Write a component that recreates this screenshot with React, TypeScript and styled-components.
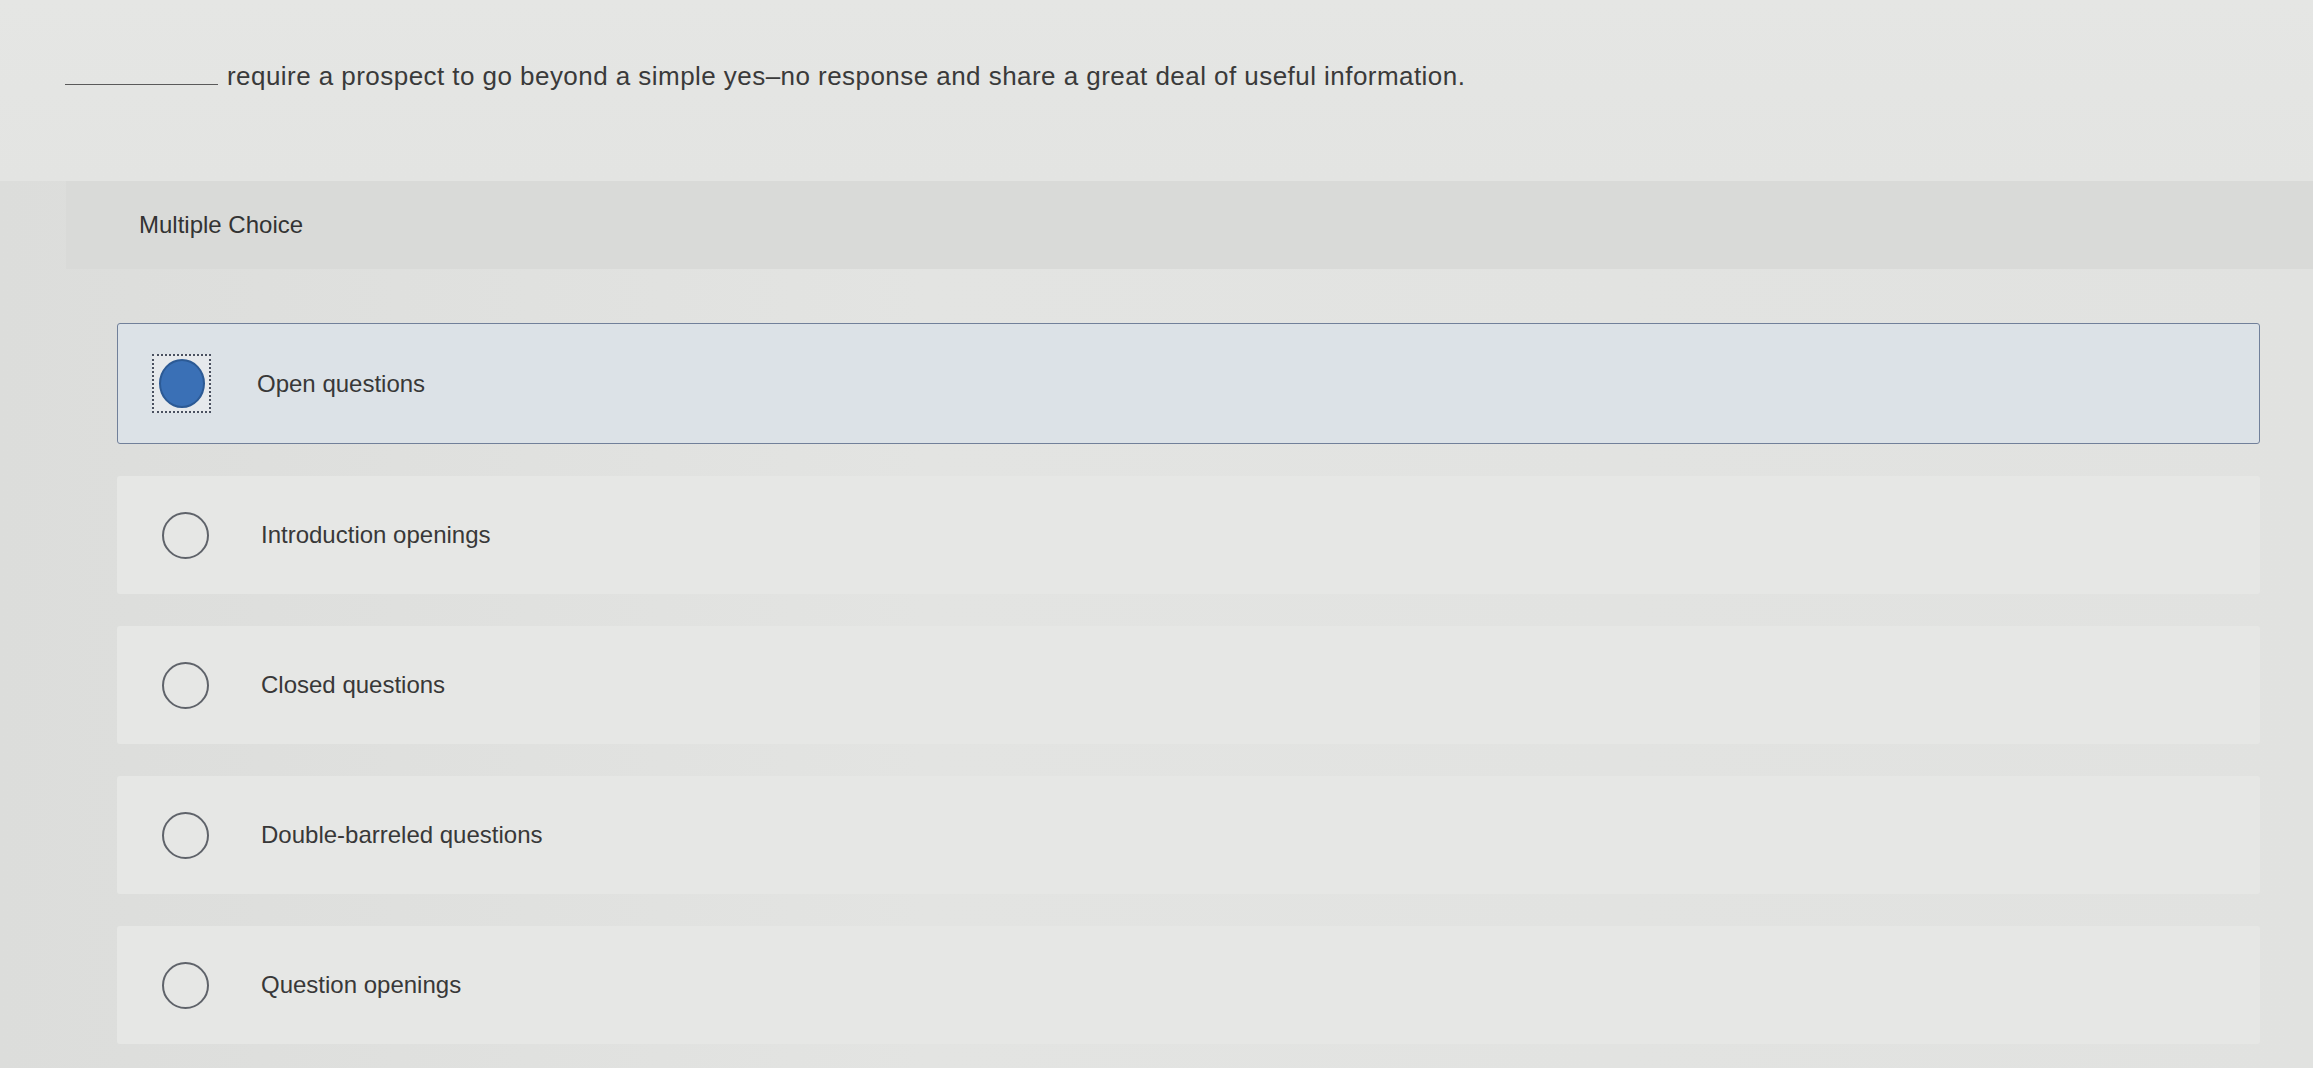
import React from 'react'
import styled, { createGlobalStyle } from 'styled-components'

const GlobalStyle = createGlobalStyle`
  html, body {
    margin: 0;
    padding: 0;
  }
  body {
    background: #dfe0de;
    font-family: "Liberation Sans", Arial, sans-serif;
    color: #333;
  }
`

const Page = styled.div`
  min-height: 1068px;
  background: linear-gradient(90deg, #dcdddb 0%, #e3e4e2 40%, #e1e2e0 100%);
`

const QuestionArea = styled.div`
  height: 181px;
  box-sizing: border-box;
  padding: 61px 0 0 65px;
  background: linear-gradient(180deg, #e5e6e4 0%, #e3e4e2 100%);
`

const Prompt = styled.p`
  margin: 0;
  display: flex;
  align-items: baseline;
  font-size: 26px;
  line-height: 30px;
  letter-spacing: 0.45px;
  color: #3a3a3a;
`

const Blank = styled.span`
  display: inline-block;
  width: 153px;
  margin-right: 9px;
  border-bottom: 1.5px solid #5a5a5a;
`

const Panel = styled.section`
  margin-left: 66px;
`

const PanelHeader = styled.div`
  height: 88px;
  display: flex;
  align-items: center;
  padding-left: 73px;
  background: #d9dad8;
  font-size: 24px;
  color: #333;
`

const OptionList = styled.div`
  display: flex;
  flex-direction: column;
  gap: 32px;
  padding: 54px 53px 0 51px;
`

const Option = styled.label<{ selected?: boolean }>`
  height: ${({ selected }) => (selected ? '121px' : '118px')};
  box-sizing: border-box;
  display: flex;
  align-items: center;
  padding-left: ${({ selected }) => (selected ? '34px' : '44px')};
  background: ${({ selected }) => (selected ? '#dce2e7' : '#e6e7e5')};
  border: ${({ selected }) => (selected ? '1.5px solid #71809a' : '1.5px solid transparent')};
  border-radius: 3px;
  cursor: pointer;
`

const FocusRing = styled.span`
  width: 59px;
  height: 59px;
  box-sizing: border-box;
  display: flex;
  align-items: center;
  justify-content: center;
  border: 2.5px dotted #4a5160;
  background: #e6e9ec;
`

const Radio = styled.span<{ checked?: boolean }>`
  width: ${({ checked }) => (checked ? '46px' : '47px')};
  height: ${({ checked }) => (checked ? '49px' : '47px')};
  box-sizing: border-box;
  border-radius: 50%;
  flex-shrink: 0;
  border: ${({ checked }) => (checked ? '2px solid #2c5a95' : '2.5px solid #5f636a')};
  background: ${({ checked }) => (checked ? '#3a70b6' : 'transparent')};
`

const OptionText = styled.span<{ selected?: boolean }>`
  margin-left: ${({ selected }) => (selected ? '46px' : '52px')};
  font-size: 24px;
  color: #383838;
`

const options = [
  'Open questions',
  'Introduction openings',
  'Closed questions',
  'Double-barreled questions',
  'Question openings',
]

export default function App() {
  const selected = 0
  return (
    <Page>
      <GlobalStyle />
      <QuestionArea>
        <Prompt>
          <Blank />
          require a prospect to go beyond a simple yes–no response and share a great deal of useful information.
        </Prompt>
      </QuestionArea>
      <Panel>
        <PanelHeader>Multiple Choice</PanelHeader>
        <OptionList>
          {options.map((text, i) => (
            <Option key={text} selected={i === selected}>
              {i === selected ? (
                <FocusRing>
                  <Radio checked />
                </FocusRing>
              ) : (
                <Radio />
              )}
              <OptionText selected={i === selected}>{text}</OptionText>
            </Option>
          ))}
        </OptionList>
      </Panel>
    </Page>
  )
}
